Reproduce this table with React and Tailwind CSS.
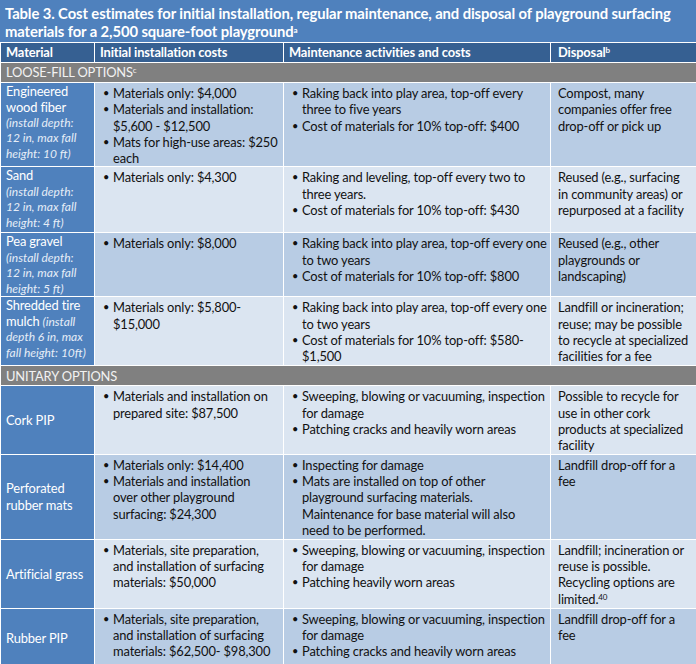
const rows = [
  {
    name: ["Engineered", "wood fiber"],
    note: ["(install depth:", "12 in, max fall", "height: 10 ft)"],
    initial: [["Materials only: $4,000"], ["Materials and installation:", "$5,600 - $12,500"], ["Mats for high-use areas: $250", "each"]],
    maint: [["Raking back into play area, top-off every", "three to five years"], ["Cost of materials for 10% top-off: $400"]],
    disposal: ["Compost, many", "companies offer free", "drop-off or pick up"],
    h: "h-[84px]",
    bg: "bg-[#b8cce4]",
  },
  {
    name: ["Sand"],
    note: ["(install depth:", "12 in, max fall", "height: 4 ft)"],
    initial: [["Materials only: $4,300"]],
    maint: [["Raking and leveling, top-off every two to", "three years."], ["Cost of materials for 10% top-off: $430"]],
    disposal: ["Reused (e.g., surfacing", "in community areas) or", "repurposed at a facility"],
    h: "h-[66px]",
    bg: "bg-[#dbe5f1]",
  },
  {
    name: ["Pea gravel"],
    note: ["(install depth:", "12 in, max fall", "height: 5 ft)"],
    initial: [["Materials only: $8,000"]],
    maint: [["Raking back into play area, top-off every one", "to two years"], ["Cost of materials for 10% top-off: $800"]],
    disposal: ["Reused (e.g., other", "playgrounds or", "landscaping)"],
    h: "h-[64px]",
    bg: "bg-[#b8cce4]",
  },
  {
    name: ["Shredded tire", "mulch"],
    inline: true,
    note: ["(install", "depth 6 in, max", "fall height: 10ft)"],
    initial: [["Materials only: $5,800-", "$15,000"]],
    maint: [["Raking back into play area, top-off every one", "to two years"], ["Cost of materials for 10% top-off: $580-", "$1,500"]],
    disposal: ["Landfill or incineration;", "reuse; may be possible", "to recycle at specialized", "facilities for a fee"],
    h: "h-[69px]",
    bg: "bg-[#dbe5f1]",
  },
];

const unitary = [
  {
    name: ["Cork PIP"],
    initial: [["Materials and installation on", "prepared site: $87,500"]],
    maint: [["Sweeping, blowing or vacuuming, inspection", "for damage"], ["Patching cracks and heavily worn areas"]],
    disposal: ["Possible to recycle for", "use in other cork", "products at specialized", "facility"],
    h: "h-[68px]",
    bg: "bg-[#dbe5f1]",
  },
  {
    name: ["Perforated", "rubber mats"],
    initial: [["Materials only: $14,400"], ["Materials and installation", "over other playground", "surfacing: $24,300"]],
    maint: [
      ["Inspecting for damage"],
      ["Mats are installed on top of other", "playground surfacing materials.", "Maintenance for base material will also", "need to be performed."],
    ],
    disposal: ["Landfill drop-off for a", "fee"],
    h: "h-[85px]",
    bg: "bg-[#b8cce4]",
  },
  {
    name: ["Artificial grass"],
    initial: [["Materials, site preparation,", "and installation of surfacing", "materials: $50,000"]],
    maint: [["Sweeping, blowing or vacuuming, inspection", "for damage"], ["Patching heavily worn areas"]],
    disposal: [
      "Landfill; incineration or",
      "reuse is possible.",
      "Recycling options are",
      <>
        limited.<sup className="text-[8px] leading-none">40</sup>
      </>,
    ],
    h: "h-[69px]",
    bg: "bg-[#dbe5f1]",
  },
  {
    name: ["Rubber PIP"],
    initial: [["Materials, site preparation,", "and installation of surfacing", "materials: $62,500- $98,300"]],
    maint: [["Sweeping, blowing or vacuuming, inspection", "for damage"], ["Patching cracks and heavily worn areas"]],
    disposal: ["Landfill drop-off for a", "fee"],
    h: "h-[60px]",
    bg: "bg-[#b8cce4]",
  },
];

const Lines = ({ lines }) =>
  lines.map((l, i) => (
    <span key={i}>
      {i > 0 && <br />}
      {l}
    </span>
  ));

const Bullets = ({ items }) => (
  <ul>
    {items.map((t, i) => (
      <li key={i} className="flex">
        <span className="w-[18px] shrink-0 pl-[8px] text-[11px]">•</span>
        <span>
          <Lines lines={t} />
        </span>
      </li>
    ))}
  </ul>
);

const cell = "border border-white align-top whitespace-nowrap";

const App = () => {
  return (
    <div
      className="w-[696px] h-[664px] overflow-hidden bg-white text-[12.9px] leading-[16.3px] tracking-[-0.15px] text-[#111]"
      style={{ fontFamily: "Lato, 'Open Sans', sans-serif" }}
    >
      <div className="bg-[#4f81bd] text-white font-bold text-[14.8px] leading-[18px] tracking-[-0.1px] px-[5px] pt-[4px] h-[42px]">
        Table 3. Cost estimates for initial installation, regular maintenance, and disposal of playground surfacing
        materials for a 2,500 square-foot playground<sup className="text-[8px] leading-none">a</sup>
      </div>
      <table className="w-full table-fixed border-collapse">
        <colgroup>
          <col className="w-[94px]" />
          <col className="w-[189px]" />
          <col className="w-[267px]" />
          <col className="w-[146px]" />
        </colgroup>
        <thead>
          <tr className="h-[20px] bg-[#366092] text-white font-bold text-left">
            <th className="border border-white px-[5px] py-0">Material</th>
            <th className="border border-white px-[5px] py-0">Initial installation costs</th>
            <th className="border border-white px-[5px] py-0">Maintenance activities and costs</th>
            <th className="border border-white px-[7px] py-0">
              Disposal<sup className="text-[8px] leading-none">b</sup>
            </th>
          </tr>
        </thead>
        <tbody>
          <tr className="h-[20px] bg-[#808080] text-[#f2f2f2]">
            <td colSpan={4} className="border border-white px-[5px]">
              LOOSE-FILL OPTIONS<sup className="text-[8px] leading-none">c</sup>
            </td>
          </tr>
          {rows.map((r) => (
            <tr key={r.name.join(" ")} className={`${r.h} ${r.bg}`}>
              <td className={`${cell} bg-[#4f81bd] text-white pl-[5px] pr-0 pt-[1px] leading-[15.5px]`}>
                <Lines lines={r.name} />
                {r.inline ? " " : null}
                <i
                  className={`${r.inline ? "" : "block"} text-[12px] leading-[15.3px] tracking-normal text-[#e6edf7]`}
                >
                  <Lines lines={r.note} />
                </i>
              </td>
              <td className={`${cell} pr-[4px] pt-[2px]`}>
                <Bullets items={r.initial} />
              </td>
              <td className={`${cell} pr-[4px] pt-[2px]`}>
                <Bullets items={r.maint} />
              </td>
              <td className={`${cell} px-[7px] pt-[2px]`}>
                <Lines lines={r.disposal} />
              </td>
            </tr>
          ))}
          <tr className="h-[20px] bg-[#808080] text-[#f2f2f2]">
            <td colSpan={4} className="border border-white px-[5px]">
              UNITARY OPTIONS
            </td>
          </tr>
          {unitary.map((r) => (
            <tr key={r.name.join(" ")} className={`${r.h} ${r.bg}`}>
              <td className="border border-white align-middle bg-[#4f81bd] text-white px-[5px] whitespace-nowrap">
                <Lines lines={r.name} />
              </td>
              <td className={`${cell} pr-[4px] pt-[2px]`}>
                <Bullets items={r.initial} />
              </td>
              <td className={`${cell} pr-[4px] pt-[2px]`}>
                <Bullets items={r.maint} />
              </td>
              <td className={`${cell} px-[7px] pt-[2px]`}>
                <Lines lines={r.disposal} />
              </td>
            </tr>
          ))}
        </tbody>
      </table>
    </div>
  );
};

export default App;
